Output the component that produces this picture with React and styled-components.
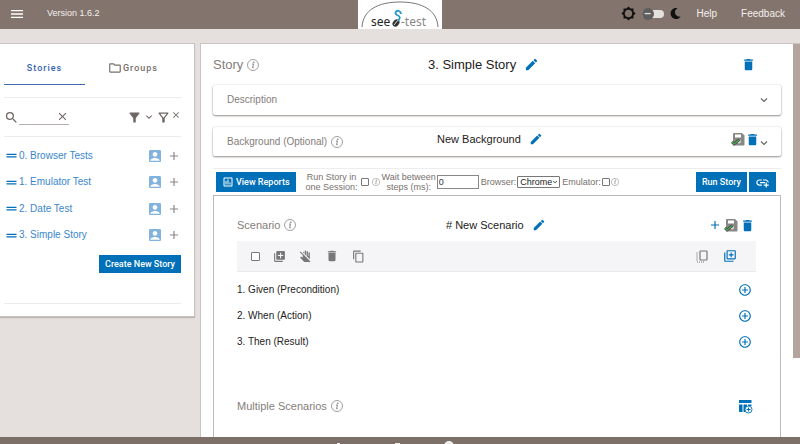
import React from "react";
import styled, { createGlobalStyle } from "styled-components";
import {
  MdMenu, MdBrightness5, MdSearch, MdClose, MdFilterAlt, MdOutlineFilterAlt,
  MdKeyboardArrowDown, MdDragHandle, MdAccountBox, MdAdd, MdEdit, MdDelete,
  MdOutlineAssessment, MdOutlineFolder, MdLibraryAdd, MdDoNotTouch, MdContentCopy,
  MdOutlineLibraryAdd, MdAddCircleOutline, MdAddLink,
} from "react-icons/md";
import { FaMoon } from "react-icons/fa";

const sans = '"Liberation Sans", Arial, sans-serif';
const roboto = 'Roboto, "Liberation Sans", sans-serif';
const blue = "#0070b8";
const brown = "#83756d";
const muted = "#857d79";

const Global = createGlobalStyle`
  *, *::before, *::after { box-sizing: border-box; }
  body { margin: 0; background: #e5e0dd; font-family: ${sans}; }
  button, input, select { font: inherit; margin: 0; }
  svg { display: block; flex: none; }
`;

const Page = styled.div`
  height: 100vh;
  display: flex;
  flex-direction: column;
  overflow: hidden;
`;

const Header = styled.header`
  flex: none;
  height: 29px;
  display: grid;
  grid-template-columns: 1fr auto 1fr;
  background: ${brown};
  color: #f4f0ee;
  font: 9px/27px ${roboto};
`;

const HeaderSide = styled.div`
  display: flex;
  align-items: center;
  justify-content: ${(p) => (p.$end ? "flex-end" : "flex-start")};
  gap: ${(p) => (p.$end ? "6px" : "22px")};
  padding: ${(p) => (p.$end ? "0 15px 2px 0" : "0 0 2px 9px")};
`;

const Version = styled.span`
  font-family: ${sans};
`;

const NavLink = styled.a`
  color: inherit;
  text-decoration: none;
  font: 10px/27px ${sans};
  margin-left: ${(p) => (p.$wide ? "18px" : "10px")};
`;

const LogoBox = styled.div`
  width: 84px;
  height: 29px;
  background: #fff;
`;

const LogoDrawing = styled.svg`
  overflow: visible;
`;

const Switch = styled.input`
  appearance: none;
  width: 22px;
  height: 8px;
  margin: 0;
  border-radius: 4px;
  background: #e4e0de;
  display: flex;
  align-items: center;

  &::before {
    content: "–";
    width: 12px;
    height: 12px;
    flex: none;
    border-radius: 50%;
    background: #5f5d5d;
    color: #ddd;
    font: bold 12px/11px ${sans};
    text-align: center;
  }
`;

const Body = styled.div`
  flex: 1;
  min-height: 0;
  display: grid;
  grid-template-columns: 195px minmax(0, 1fr);
  gap: 5px;
  padding-top: 14px;
`;

const Sidebar = styled.aside`
  align-self: start;
  background: #fff;
  border: 1px solid #c9c4c1;
  border-left: 0;
  box-shadow: 0 1px 1px #bbb5b2;
  padding: 7px 13px 12px 4px;
`;

const Tabs = styled.div`
  display: grid;
  grid-template-columns: 81px 1fr;
  padding-bottom: 12px;
  border-bottom: 1px solid #ececec;
`;

const Tab = styled.button`
  height: 34px;
  padding: 0;
  display: flex;
  align-items: center;
  justify-content: center;
  gap: 1px;
  border: 0;
  border-bottom: 1px solid ${(p) => (p.$active ? "#3c6db4" : "transparent")};
  background: none;
  color: ${(p) => (p.$active ? "#3562ad" : "#77706c")};
  font: 500 9px/12px ${roboto};
  letter-spacing: 1px;
`;

const Filters = styled.div`
  height: 39px;
  display: flex;
  align-items: center;
  justify-content: space-between;
  border-bottom: 1px solid #ececec;
  color: #6f6764;
`;

const SearchBox = styled.label`
  display: flex;
  align-items: center;
`;

const SearchField = styled.span`
  display: flex;
  align-items: center;
  width: 50px;
  height: 15px;
  border-bottom: 1px solid #b5b0ad;
`;

const SearchInput = styled.input`
  flex: 1;
  min-width: 0;
  height: 12px;
  padding: 0;
  border: 0;
  outline: 0;
  background: none;
  font-size: 9px;
`;

const IconButton = styled.button`
  display: flex;
  align-items: flex-start;
  justify-content: center;
  padding: 0;
  border: 0;
  background: none;
  color: ${(p) => p.$color || blue};
  align-self: ${(p) => (p.$low ? "flex-end" : "center")};
`;

const FilterIcons = styled.div`
  display: flex;
  gap: 1px;
`;

const StoryList = styled.ul`
  list-style: none;
  margin: 0;
  padding: 5px 0 0;
`;

const StoryItem = styled.li`
  height: 27px;
  display: flex;
  align-items: center;
  color: #3a86cc;
  font: 10px/14px ${sans};

  &:nth-child(even) { height: 26px; }
`;

const StoryLink = styled.a`
  flex: 1;
  color: inherit;
  text-decoration: none;
`;

const RowIcons = styled.span`
  display: flex;
  align-items: center;
  gap: 4px;
`;

const CreateRow = styled.div`
  display: flex;
  justify-content: flex-end;
  padding: 7px 0 30px;
  border-bottom: 1px solid #ececec;
`;

const Primary = styled.button`
  height: ${(p) => (p.$small ? "18px" : "20px")};
  display: flex;
  align-items: center;
  justify-content: center;
  gap: 2px;
  padding: 0 6px;
  border: 0;
  background: ${blue};
  color: #fff;
  font: 500 9px/12px ${roboto};
  white-space: nowrap;
`;

const MainFrame = styled.main`
  min-width: 0;
  min-height: 0;
  display: grid;
  grid-template-columns: minmax(0, 1fr) 7px;
  background: #fff;
  border-top: 1px solid #c9c4c1;
  border-left: 1px solid #c9c4c1;
  overflow: hidden;
`;

const Content = styled.div`
  min-width: 0;
  min-height: 0;
  display: flex;
  flex-direction: column;
  padding: 0 12px;
  color: ${muted};
`;

const ScrollThumb = styled.div`
  height: 80%;
  background: #b5a49d;
`;

const TitleRow = styled.div`
  flex: none;
  height: ${(p) => p.$height};
  display: grid;
  grid-template-columns: ${(p) => p.$start} auto 1fr;
  align-items: center;
  padding-right: ${(p) => p.$right || "0"};
`;

const Label = styled.span`
  display: flex;
  align-items: center;
  gap: ${(p) => p.$gap || "4px"};
  font: ${(p) => p.$size}/16px ${sans};
`;

const Title = styled.h2`
  margin: 0;
  display: flex;
  align-items: center;
  gap: 8px;
  padding-bottom: ${(p) => (p.$raised ? "5px" : "0")};
  color: #1d1b1b;
  font: 400 ${(p) => p.$size}/16px ${sans};
`;

const Actions = styled.div`
  display: flex;
  align-items: center;
  justify-content: flex-end;
  gap: ${(p) => (p.$raised ? "0" : "2px")};
  padding-bottom: ${(p) => (p.$raised ? "5px" : "0")};
`;

const Panel = styled.section`
  flex: none;
  margin-bottom: 12px;
  padding: 0 13px 0 14px;
  border-radius: 2px;
  background: #fff;
  box-shadow: 0 1px 2px #96918e, 0 0 2px #dedcdb;
`;

const RunBar = styled.div`
  flex: none;
  height: 27px;
  display: flex;
  align-items: center;
  padding: 0 5px 0 3px;
  border-top: 1px solid #ededed;
  font: 9px/10px ${sans};
  color: #77706c;
`;

const Option = styled.label`
  display: flex;
  align-items: center;
  gap: ${(p) => p.$gap || "1px"};
  margin-left: ${(p) => p.$left || "2px"};
  text-align: center;
  white-space: nowrap;
`;

const Check = styled.input`
  appearance: none;
  width: ${(p) => p.$size || "8px"};
  height: ${(p) => p.$size || "8px"};
  border: 1px solid #777;
  border-radius: 1px;
  background: #fff;
`;

const WaitInput = styled.input`
  width: 42px;
  height: 14px;
  padding: 0 1px;
  border: 1px solid #888;
  color: #333;
`;

const BrowserSelect = styled.select`
  appearance: none;
  width: 43px;
  height: 12px;
  padding: 0 2px;
  border: 1px solid #777;
  border-radius: 1px;
  background: #fff;
  color: #222;
  line-height: 10px;
`;

const SelectWrap = styled.span`
  display: grid;
  align-items: center;
  > * { grid-area: 1 / 1; }
  > svg { justify-self: end; margin-right: 1px; color: #222; pointer-events: none; }
`;

const RunButtons = styled.div`
  display: flex;
  gap: 2px;
  margin-left: auto;
`;

const ScenarioBox = styled.section`
  flex: 1;
  min-height: 0;
  padding: 13px 24px 0 23px;
  border: 1px solid #bbb;
  border-bottom: 0;
`;

const StepTools = styled.div`
  height: 31px;
  display: flex;
  align-items: center;
  gap: 13px;
  padding: 0 19px 0 14px;
  background: #f5f4f6;
  border-bottom: 1px solid #e9e8ea;
`;

const ToolsEnd = styled.div`
  display: flex;
  gap: 15px;
  margin-left: auto;
`;

const Steps = styled.ol`
  list-style: none;
  margin: 0;
  padding: 5px 4px 35px 0;
`;

const Step = styled.li`
  height: 26px;
  display: flex;
  align-items: center;
  justify-content: space-between;
  color: #222;
  font: 10px/14px ${sans};
`;

const Footer = styled.footer`
  flex: none;
  height: 7px;
  overflow: hidden;
  display: flex;
  justify-content: center;
  background: #7d7068;
`;

function Info({ size = 12 }) {
  return (
    <svg width={size} height={size} viewBox="0 0 24 24" fill="none" stroke="#8d8886" strokeWidth="1.6">
      <circle cx="12" cy="12" r="11" />
      <path d="M10 10h3l-2 7.500h2.500" strokeWidth="2" />
      <circle cx="13.500" cy="6.500" r="1" fill="#8d8886" />
    </svg>
  );
}

function Chevron() {
  return (
    <svg width="8" height="8" viewBox="0 0 16 16" fill="none" stroke="#666" strokeWidth="2.400">
      <path d="M2 5l6 6 6-6" />
    </svg>
  );
}

function SaveOk() {
  return (
    <svg width="14" height="14" viewBox="0 0 28 28">
      <path d="M6 2h16l5 5v18a2 2 0 0 1-2 2H6a2 2 0 0 1-2-2V4a2 2 0 0 1 2-2z" fill="#898687" />
      <path d="M8 5h12v6H8z" fill="#fff" />
      <circle cx="16" cy="19" r="4" fill="#d9d9d9" />
      <path d="M2 20l4 4L17 15" fill="none" stroke="#3b302c" strokeWidth="5" />
      <path d="M2 20l4 4L17 15" fill="none" stroke="#4da957" strokeWidth="3" />
    </svg>
  );
}

function CopyDown() {
  return (
    <svg width="12" height="13" viewBox="0 0 24 26" fill="none" stroke="#777" strokeWidth="2.400">
      <rect x="8" y="2" width="14" height="18" rx="1" />
      <path d="M2 5v17" strokeDasharray="2 2" />
      <path d="M2 24h16" strokeDasharray="2 2" />
    </svg>
  );
}

function TableAdd() {
  return (
    <svg width="15" height="15" viewBox="0 0 30 30">
      <path d="M2 2h25v6H2zM2 11h7v15H4a2 2 0 0 1-2-2zM11 11h7v3l-3 4v8h-4zM20 11h7v3h-7z" fill={blue} />
      <circle cx="21" cy="21" r="7" fill="#fff" stroke={blue} strokeWidth="1.800" />
      <path d="M21 17v8M17 21h8" stroke={blue} strokeWidth="2" />
    </svg>
  );
}

function Logo() {
  return (
    <LogoDrawing width="84" height="29" viewBox="0 0 84 29" role="img" aria-label="seed-test">
      <path d="M4 27C5 10 20 2 42 2s37 8 38 25" fill="none" stroke="#777" />
      <text x="13" y="26" fontFamily="Noto Sans, sans-serif" fontSize="12" fill="#222">see</text>
      <ellipse cx="38" cy="23" rx="4" ry="3" fill="#333" transform="rotate(-50 38 23)" />
      <path d="M36 25l4-5" stroke="#ddd" />
      <path d="M40 21c3-3 2-5-1-6-3-2-1-5 2-4 2 1 2 2 2 3" fill="none" stroke="#2499d1" strokeWidth="1.800" />
      <text x="43" y="26" fontFamily="Noto Sans, sans-serif" fontSize="12" fill="#888">-test</text>
    </LogoDrawing>
  );
}

const stories = ["0. Browser Tests", "1. Emulator Test", "2. Date Test", "3. Simple Story"];
const steps = ["1. Given (Precondition)", "2. When (Action)", "3. Then (Result)"];

export default function App() {
  return (
    <Page>
      <Global />
      <Header>
        <HeaderSide>
          <IconButton $color="#fff" aria-label="Menu"><MdMenu size={16} /></IconButton>
          <Version>Version 1.6.2</Version>
        </HeaderSide>
        <LogoBox><Logo /></LogoBox>
        <HeaderSide $end>
          <MdBrightness5 size={15} color="#111" />
          <Switch type="checkbox" role="switch" aria-label="Dark mode" />
          <FaMoon size={11} color="#111" />
          <NavLink href="#help">Help</NavLink>
          <NavLink href="#feedback" $wide>Feedback</NavLink>
        </HeaderSide>
      </Header>

      <Body>
        <Sidebar>
          <Tabs role="tablist">
            <Tab role="tab" aria-selected="true" $active>Stories</Tab>
            <Tab role="tab" aria-selected="false"><MdOutlineFolder size={14} />Groups</Tab>
          </Tabs>
          <Filters>
            <SearchBox>
              <MdSearch size={15} />
              <SearchField>
                <SearchInput type="text" aria-label="Search stories" />
                <MdClose size={13} />
              </SearchField>
            </SearchBox>
            <FilterIcons>
              <IconButton $color="#6f6764" aria-label="Filter"><MdFilterAlt size={15} /></IconButton>
              <IconButton $color="#6f6764" aria-label="Filter options"><MdKeyboardArrowDown size={12} /></IconButton>
              <IconButton $color="#6f6764" aria-label="Clear filter">
                <MdOutlineFilterAlt size={15} /><MdClose size={10} />
              </IconButton>
            </FilterIcons>
          </Filters>
          <StoryList>
            {stories.map((s) => (
              <StoryItem key={s}>
                <MdDragHandle size={15} color={blue} />
                <StoryLink href="#story">{s}</StoryLink>
                <RowIcons>
                  <MdAccountBox size={16} color="#82b3de" />
                  <IconButton $color="#888" aria-label={`Add to ${s}`}><MdAdd size={14} /></IconButton>
                </RowIcons>
              </StoryItem>
            ))}
          </StoryList>
          <CreateRow><Primary $small>Create New Story</Primary></CreateRow>
        </Sidebar>

        <MainFrame>
          <Content>
            <TitleRow $height="41px" $start="215px" $right="25px">
              <Label $size="13px">Story <Info /></Label>
              <Title $size="13px">3. Simple Story <MdEdit size={15} color={blue} /></Title>
              <Actions><IconButton aria-label="Delete story"><MdDelete size={15} /></IconButton></Actions>
            </TitleRow>

            <Panel>
              <TitleRow $height="30px" $start="215px">
                <Label $size="10px">Description</Label>
                <span />
                <Actions><IconButton aria-label="Expand description"><Chevron /></IconButton></Actions>
              </TitleRow>
            </Panel>

            <Panel>
              <TitleRow $height="29px" $start="210px">
                <Label $size="10px">Background (Optional) <Info /></Label>
                <Title $size="11px" $raised>New Background <MdEdit size={14} color={blue} /></Title>
                <Actions $raised>
                  <IconButton aria-label="Save background"><SaveOk /></IconButton>
                  <IconButton aria-label="Delete background"><MdDelete size={15} /></IconButton>
                  <IconButton $low aria-label="Expand background"><Chevron /></IconButton>
                </Actions>
              </TitleRow>
            </Panel>

            <RunBar>
              <Primary><MdOutlineAssessment size={12} />View Reports</Primary>
              <Option $left="10px" $gap="3px">
                <span>Run Story in<br />one Session:</span>
                <Check type="checkbox" />
                <Info size={8} />
              </Option>
              <Option>
                <span>Wait between<br />steps (ms):</span>
                <WaitInput type="text" defaultValue="0" />
              </Option>
              <Option>
                Browser:
                <SelectWrap>
                  <BrowserSelect defaultValue="Chrome">
                    <option>Chrome</option>
                    <option>Firefox</option>
                  </BrowserSelect>
                  <MdKeyboardArrowDown size={8} />
                </SelectWrap>
              </Option>
              <Option>
                Emulator:
                <Check type="checkbox" />
                <Info size={8} />
              </Option>
              <RunButtons>
                <Primary>Run Story</Primary>
                <Primary aria-label="Link story"><MdAddLink size={15} /></Primary>
              </RunButtons>
            </RunBar>

            <ScenarioBox>
              <TitleRow $height="32px" $start="209px" $right="1px">
                <Label $size="11px">Scenario <Info /></Label>
                <Title $size="11px"># New Scenario <MdEdit size={14} color={blue} /></Title>
                <Actions>
                  <IconButton aria-label="Add scenario"><MdAdd size={14} /></IconButton>
                  <IconButton aria-label="Save scenario"><SaveOk /></IconButton>
                  <IconButton aria-label="Delete scenario"><MdDelete size={15} /></IconButton>
                </Actions>
              </TitleRow>
              <StepTools>
                <Check type="checkbox" $size="9px" aria-label="Select all steps" />
                <IconButton $color="#777" aria-label="Add step"><MdLibraryAdd size={13} /></IconButton>
                <IconButton $color="#777" aria-label="Deactivate"><MdDoNotTouch size={13} /></IconButton>
                <IconButton $color="#777" aria-label="Delete step"><MdDelete size={14} /></IconButton>
                <IconButton $color="#777" aria-label="Copy step"><MdContentCopy size={13} /></IconButton>
                <ToolsEnd>
                  <IconButton aria-label="Paste step"><CopyDown /></IconButton>
                  <IconButton aria-label="Insert steps"><MdOutlineLibraryAdd size={14} /></IconButton>
                </ToolsEnd>
              </StepTools>
              <Steps>
                {steps.map((s) => (
                  <Step key={s}>{s}<IconButton aria-label={`Add ${s}`}><MdAddCircleOutline size={14} /></IconButton></Step>
                ))}
              </Steps>
              <TitleRow $height="32px" $start="209px" $right="3px">
                <Label $size="11px">Multiple Scenarios <Info /></Label>
                <span />
                <Actions><IconButton aria-label="Add examples"><TableAdd /></IconButton></Actions>
              </TitleRow>
            </ScenarioBox>
          </Content>
          <ScrollThumb />
        </MainFrame>
      </Body>

      <Footer>
        <svg width="140" height="7" viewBox="0 0 140 7" fill="#f1eeec">
          <rect x="7" y="6" width="3" height="1" />
          <rect x="65" y="6" width="5" height="1" />
          <circle cx="119" cy="9" r="5" />
        </svg>
      </Footer>
    </Page>
  );
}
